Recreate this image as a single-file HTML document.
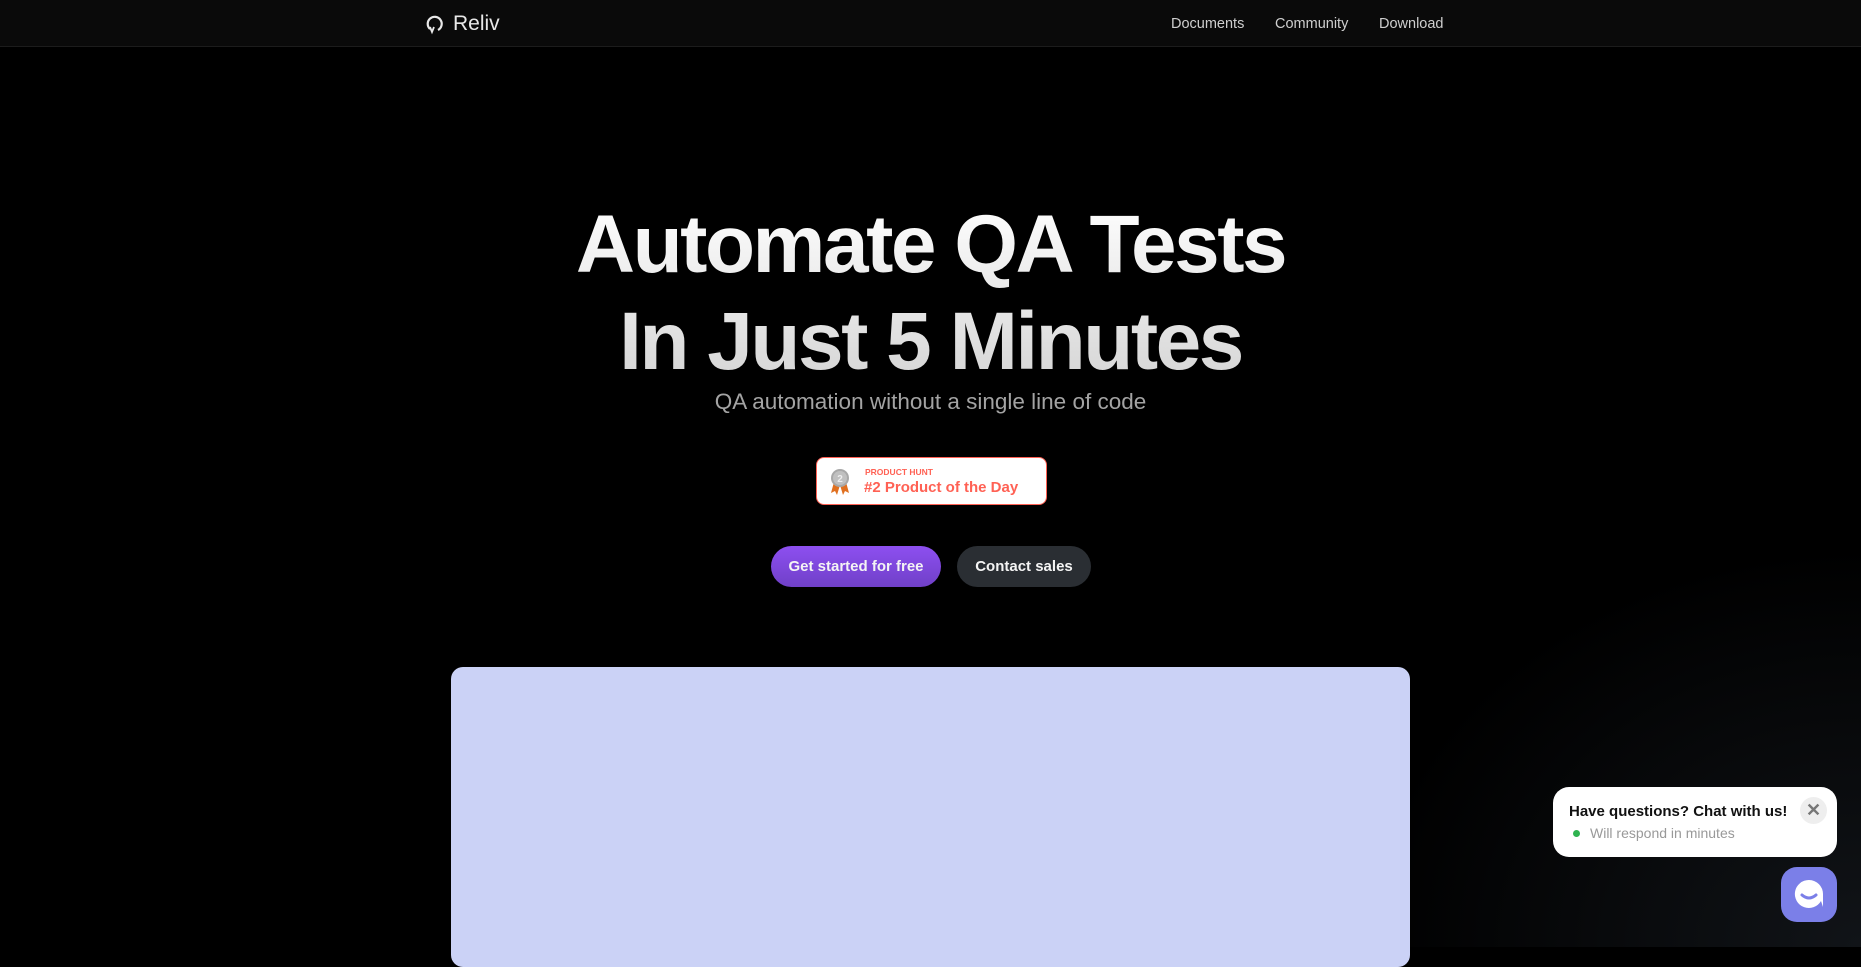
<!DOCTYPE html>
<html><head><meta charset="utf-8"><style>
*{margin:0;padding:0;box-sizing:border-box}
body{width:1861px;height:947px;overflow:hidden;background:#000;font-family:"Liberation Sans",sans-serif;position:relative}
.bg{position:absolute;inset:0;background:radial-gradient(ellipse 500px 400px at 1861px 947px,#111418,#000)}
nav{position:absolute;top:0;left:0;right:0;height:47px;background:#0a0a0a;border-bottom:1px solid #1c1c1c}
.logo{position:absolute;left:425px;top:12px;display:flex;align-items:center;color:#e8e8e8;font-size:21px}
.links a{position:absolute;top:16px;color:#cfcfcf;font-size:14.5px;text-decoration:none}
h1{position:absolute;left:0;right:0;top:196px;text-align:center;color:#ececec;font-size:82px;line-height:97px;font-weight:bold;letter-spacing:-2.5px;background:linear-gradient(#fff,#d4d4d4);-webkit-background-clip:text;color:transparent}
.sub{position:absolute;left:0;right:0;top:389px;text-align:center;color:#a3a3a3;font-size:22.5px}
.badge{position:absolute;left:816px;top:457px;width:231px;height:48px;background:#fff;border:1px solid #ff6154;border-radius:8px}
.btn{position:absolute;top:546px;height:41px;border-radius:21px;color:#f4f4f4;font-weight:bold;font-size:15px;line-height:41px;text-align:center}
.video{position:absolute;left:451px;top:667px;width:959px;height:300px;background:#cbd2f6;border-radius:12px}
.chat{position:absolute;left:1553px;top:787px;width:284px;height:70px;background:#fff;border-radius:16px}
.cbtn{position:absolute;left:1781px;top:867px;width:56px;height:55px;border-radius:16px;background:#7b7fe8}
</style></head><body>
<div class="bg"></div>
<nav>
<div class="logo"><svg width="20" height="22" viewBox="0 0 20 22"><path d="M5 16 A7 7 0 1 1 13 17" fill="none" stroke="#e8e8e8" stroke-width="2.2"/><path d="M5 14 L7 19 L9 14" fill="none" stroke="#e8e8e8" stroke-width="1.8"/></svg><span style="margin-left:8px">Reliv</span></div>
<div class="links"><a style="left:1171px">Documents</a><a style="left:1275px">Community</a><a style="left:1379px">Download</a></div>
</nav>
<h1>Automate QA Tests<br>In Just 5 Minutes</h1>
<div class="sub">QA automation without a single line of code</div>
<div class="badge">
<svg style="position:absolute;left:12px;top:10px" width="22" height="28" viewBox="0 0 22 28"><path d="M5 14 L2 25 L6 23 L8 27 L11 17Z M17 14 L20 25 L16 23 L14 27 L11 17Z" fill="#e07020"/><circle cx="11" cy="10" r="9" fill="#a8a8a8"/><circle cx="11" cy="10" r="7" fill="#c0c0c0"/><text x="11" y="14" font-size="10" font-weight="bold" fill="#eee" text-anchor="middle" font-family="Liberation Sans">2</text></svg>
<div style="position:absolute;left:48px;top:9px;color:#ff6154;font-size:8.5px;font-weight:bold">PRODUCT HUNT</div>
<div style="position:absolute;left:47px;top:21px;color:#ff6154;font-size:15px;font-weight:bold">#2 Product of the Day</div>
</div>
<div class="btn" style="left:771px;width:170px;background:linear-gradient(#8d4ff0,#7040c8)">Get started for free</div>
<div class="btn" style="left:957px;width:134px;background:#2a2e33">Contact sales</div>
<div class="video"></div>
<div class="chat">
<div style="position:absolute;left:16px;top:16px;font-size:15px;font-weight:bold;color:#111">Have questions? Chat with us!</div>
<div style="position:absolute;left:20px;top:43px;width:7px;height:7px;border-radius:50%;background:#2fb350"></div>
<div style="position:absolute;left:37px;top:38px;font-size:14px;color:#999">Will respond in minutes</div>
<div style="position:absolute;left:247px;top:10px;width:27px;height:27px;border-radius:50%;background:#eee;color:#777;font-size:18px;font-weight:bold;text-align:center;line-height:27px">✕</div>
</div>
<div class="cbtn"><svg width="56" height="55" viewBox="0 0 56 55"><path d="M28 13 A14 14 0 1 0 40 34 L42 40 L42 27 A14 14 0 0 0 28 13Z" fill="#fff"/><path d="M21 28 Q28 34 35 28" fill="none" stroke="#7b7fe8" stroke-width="3" stroke-linecap="round"/></svg></div>
</body></html>
